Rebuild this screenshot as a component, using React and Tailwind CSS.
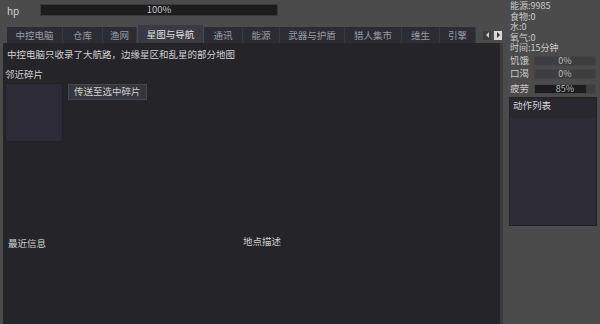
import React from 'react';

const tabs = [
    { name: "中控电脑", w: "w-[56px]" },
    { name: "仓库", w: "w-[40px]" },
    { name: "渔网", w: "w-[34px]" },
    { name: "星图与导航", w: "w-[67px]", active: true },
    { name: "通讯", w: "w-[39px]" },
    { name: "能源", w: "w-[37px]" },
    { name: "武器与护盾", w: "w-[65px]" },
    { name: "猎人集市", w: "w-[57px]" },
    { name: "维生", w: "w-[38px]" },
    { name: "引擎", w: "w-[36px]" },
];

const StatBar = ({ label, value, fill }) => (
    <div className="flex items-center h-[12px] mb-[1px]">
        <span className="w-[25px] pl-[1px] text-[#c8c8c8]">{label}</span>
        <div className="relative w-[62px] h-[10px] bg-[#3e3e40] border border-[#444]">
            <div className="absolute inset-y-0 left-0 bg-[#1c1c1e]" style={{ width: `${fill}%` }} />
            <span className="absolute inset-0 flex items-center justify-center text-[#bdbdbd] text-[9px] leading-none">{value}</span>
        </div>
    </div>
);

const App = () => {
    return (
        <div
            className="w-[600px] h-[324px] bg-[#4b4b4b] flex overflow-hidden text-[9.5px] leading-[11px]"
            style={{ fontFamily: '"Noto Sans CJK SC", "Noto Sans", sans-serif' }}
        >
            {/* Left side */}
            <div className="w-[504px] flex flex-col">
                {/* hp */}
                <div className="h-[20px] flex items-center pt-[1px]">
                    <span className="w-[40px] pl-[7px] text-[#cfcfcf] text-[10px]">hp</span>
                    <div className="relative w-[238px] h-[12px] mt-[-1px] bg-[#1d1d1f] border border-[#3a3a3a]">
                        <span className="absolute inset-0 flex items-center justify-center text-[#c4c4c4] text-[9.5px] leading-none">100%</span>
                    </div>
                </div>

                {/* Tabs */}
                <div className="h-[23px] flex items-end pl-[7px]">
                    {tabs.map((t) => (
                        <div
                            key={t.name}
                            className={
                                t.active
                                    ? `${t.w} h-[19px] flex items-center justify-center bg-[#3a3a44] text-[#e2e2e2] border-x border-t border-[#4a4a55]`
                                    : `${t.w} h-[16px] flex items-center justify-center bg-[#2c2c34] text-[#9a9aa2] border-r border-[#3a3a42]`
                            }
                        >
                            {t.name}
                        </div>
                    ))}
                    <div className="flex items-center gap-[3px] h-[16px] ml-[7px]">
                        <div className="w-[8px] h-[9px] bg-[#3c3c3c] flex items-center justify-center">
                            <span className="w-0 h-0 border-y-[3px] border-y-transparent border-r-[3px] border-r-[#c8c8c8]" />
                        </div>
                        <div className="w-[8px] h-[9px] bg-[#d8d8d8] flex items-center justify-center">
                            <span className="w-0 h-0 border-y-[3px] border-y-transparent border-l-[3px] border-l-[#333]" />
                        </div>
                    </div>
                </div>

                {/* Main panel */}
                <div className="flex-1 ml-[3px] bg-[#252429] border-r-[3px] border-[#3b3b3d] flex flex-col text-[#d0d0d0]">
                    <p className="mt-[6px] pl-[4px]">中控电脑只收录了大航路，边缘星区和乱星的部分地图</p>
                    <p className="mt-[9px] pl-[2px]">邻近碎片</p>
                    <div className="flex mt-[3px] pl-[2px] gap-[5px]">
                        <div className="w-[58px] h-[59px] bg-[#2c2b37] border border-[#202027]" />
                        <button className="h-[16px] px-[5px] bg-[#36363e] border border-[#46464e] text-[#cfcfcf] leading-none mt-[1px]">
                            传送至选中碎片
                        </button>
                    </div>
                    <div className="flex mt-[94px]">
                        <p className="w-[240px] pl-[5px] mt-[2px]">最近信息</p>
                        <p>地点描述</p>
                    </div>
                </div>
            </div>

            {/* Right side */}
            <div className="flex-1 pl-[6px] pr-[3px] text-[#cacaca]">
                <div className="text-[9px] leading-[10.5px] pt-[1px] pl-[1px]">
                    <p>能源:9985</p>
                    <p>食物:0</p>
                    <p>水:0</p>
                    <p>氧气:0</p>
                    <p>时间:15分钟</p>
                </div>
                <div className="mt-[1px]">
                    <StatBar label="饥饿" value="0%" fill={0} />
                    <StatBar label="口渴" value="0%" fill={0} />
                    <div className="mt-[3px]">
                        <StatBar label="疲劳" value="85%" fill={85} />
                    </div>
                </div>
                <div className="mt-[2px] w-[88px] h-[129px] border border-[#222] bg-[#2d2c37] flex flex-col">
                    <div className="h-[20px] bg-[#29282e] pl-[3px] pt-[2px] text-[#d4d4d4]">动作列表</div>
                </div>
            </div>
        </div>
    );
};

export default App;
